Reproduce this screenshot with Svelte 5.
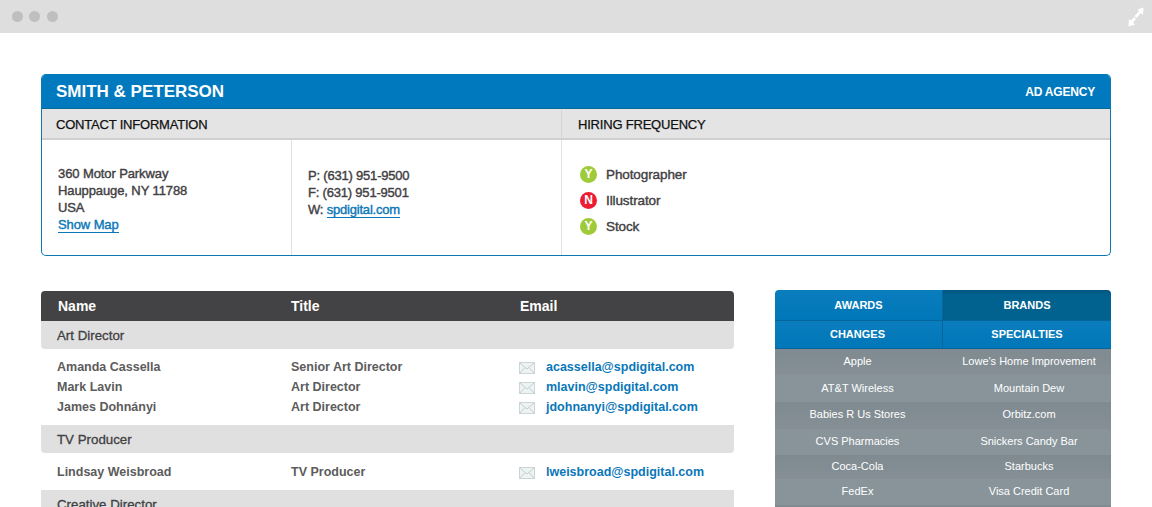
<script lang="ts">
  const phones = [
    { label: 'P:', value: '(631) 951-9500' },
    { label: 'F:', value: '(631) 951-9501' },
  ];
  const hiring = [
    { flag: 'Y', label: 'Photographer' },
    { flag: 'N', label: 'Illustrator' },
    { flag: 'Y', label: 'Stock' },
  ];
  const groups = [
    {
      name: 'Art Director',
      people: [
        { name: 'Amanda Cassella', title: 'Senior Art Director', email: 'acassella@spdigital.com' },
        { name: 'Mark Lavin', title: 'Art Director', email: 'mlavin@spdigital.com' },
        { name: 'James Dohnányi', title: 'Art Director', email: 'jdohnanyi@spdigital.com' },
      ],
    },
    {
      name: 'TV Producer',
      people: [{ name: 'Lindsay Weisbroad', title: 'TV Producer', email: 'lweisbroad@spdigital.com' }],
    },
    { name: 'Creative Director', people: [] },
  ];
  const tabs = [
    { label: 'AWARDS', active: false },
    { label: 'BRANDS', active: true },
    { label: 'CHANGES', active: false },
    { label: 'SPECIALTIES', active: false },
  ];
  const brands = [
    { left: 'Apple', right: "Lowe's Home Improvement", height: 26, lift: 2 },
    { left: 'AT&T Wireless', right: 'Mountain Dew', height: 27, lift: 2 },
    { left: 'Babies R Us Stores', right: 'Orbitz.com', height: 27, lift: 4 },
    { left: 'CVS Pharmacies', right: 'Snickers Candy Bar', height: 26, lift: 2 },
    { left: 'Coca-Cola', right: 'Starbucks', height: 24, lift: 3 },
    { left: 'FedEx', right: 'Visa Credit Card', height: 26, lift: 2 },
    { left: '', right: '', height: 26, lift: 0 },
  ];
</script>

<div class="page">
  <div class="chrome">
    <div class="dots"><i></i><i></i><i></i></div>
    <svg class="expand" viewBox="0 0 16 20" width="16" height="20" aria-hidden="true">
      <path d="M15.5 0.5 L15 8 L13 6 L8.5 11 L6.5 9 L11 4 L9.5 2.5 Z" fill="#fff" />
      <path d="M0.5 19.5 L1 12 L3 13.5 L6 10 L8 12 L5 15.5 L7 17.5 Z" fill="#fff" />
    </svg>
  </div>

  <section class="card">
    <header class="card-head">
      <h1>SMITH &amp; PETERSON</h1>
      <span>AD AGENCY</span>
    </header>
    <div class="card-grid">
      <h2 class="contact-title">CONTACT INFORMATION</h2>
      <h2 class="hiring-title">HIRING FREQUENCY</h2>
      <div class="address">
        <div>360 Motor Parkway</div>
        <div>Hauppauge, NY 11788</div>
        <div>USA</div>
        <a href="#map">Show Map</a>
      </div>
      <div class="phones">
        {#each phones as phone}
          <div>{phone.label} {phone.value}</div>
        {/each}
        <div>W: <a href="#web">spdigital.com</a></div>
      </div>
      <ul class="hiring">
        {#each hiring as item}
          <li>
            <b class:no={item.flag === 'N'}>{item.flag}</b>
            <span>{item.label}</span>
          </li>
        {/each}
      </ul>
    </div>
  </section>

  <div class="columns">
    <div class="contacts">
      <div class="row table-head">
        <span>Name</span>
        <span>Title</span>
        <span>Email</span>
      </div>
      {#each groups as group}
        <div class="group-name">{group.name}</div>
        {#if group.people.length}
          <div class="people" class:single={group.people.length === 1}>
            {#each group.people as person}
              <div class="row person">
                <span>{person.name}</span>
                <span>{person.title}</span>
                <span class="email">
                  <svg viewBox="0 0 16 12" width="16" height="12" aria-hidden="true">
                    <rect x="0.5" y="0.5" width="15" height="11" fill="#edf2f2" stroke="#ccd6d6" />
                    <path d="M1 1 L8 7 L15 1 M1 11 L6 5.5 M15 11 L10 5.5" fill="none" stroke="#c4d0d0" />
                  </svg>
                  <a href="#mail">{person.email}</a>
                </span>
              </div>
            {/each}
          </div>
        {/if}
      {/each}
    </div>

    <aside class="side">
      <div class="tabs">
        {#each tabs as tab}
          <div class="tab" class:active={tab.active}>{tab.label}</div>
        {/each}
      </div>
      <div class="brands">
        {#each brands as row}
          <div class="brand-row" style={`height:${row.height}px;padding-bottom:${row.lift}px`}>
            <span>{row.left}</span>
            <span class="right">{row.right}</span>
          </div>
        {/each}
      </div>
    </aside>
  </div>
</div>

<style>
  :global(body) {
    margin: 0;
    background: #fff;
    font-family: "Liberation Sans", Arial, sans-serif;
  }
  .page { height: 507px; overflow: hidden; color: #414042; }
  a { color: #0a77b8; text-decoration: none; }

  .chrome {
    height: 33px;
    display: flex;
    align-items: center;
    justify-content: space-between;
    padding: 0 8px 0 12px;
    background: #dedede;
  }
  .dots { display: flex; gap: 6px; margin-top: -1px; }
  .dots i { width: 11px; height: 11px; border-radius: 50%; background: #bfbfbf; }
  .dots i:last-child { margin-left: 1px; }
  .expand { margin-top: 1px; }

  .card {
    width: 1070px;
    box-sizing: border-box;
    margin: 41px 0 0 41px;
    border: 1px solid #0a77b0;
    border-top: 0;
    border-radius: 5px;
    overflow: hidden;
  }
  .card-head {
    height: 35px;
    display: flex;
    align-items: center;
    justify-content: space-between;
    box-sizing: border-box;
    padding: 2px 15px 0 14px;
    background: #0079be;
    border-bottom: 1px solid #0a6a9e;
    color: #fff;
  }
  .card-head h1 { margin: 0; font-size: 17px; font-weight: 700; }
  .card-head span { font-size: 12px; font-weight: 700; letter-spacing: -0.2px; }

  .card-grid {
    display: grid;
    grid-template-columns: 250px 270px 1fr;
    grid-template-rows: 31px 115px;
    font-size: 13px;
    letter-spacing: -0.1px;
    -webkit-text-stroke: 0.4px currentColor;
  }
  h2 {
    margin: 0;
    display: flex;
    align-items: center;
    background: #e4e4e4;
    border-bottom: 2px solid #cfcfcf;
    box-sizing: border-box;
    padding-top: 2px;
    color: #111;
    font-size: 13px;
    font-weight: 400;
    letter-spacing: -0.2px;
    -webkit-text-stroke: 0.25px currentColor;
  }
  .contact-title { grid-column: 1 / 3; padding-left: 14px; border-right: 1px solid #d5d5d5; }
  .hiring-title { padding-left: 16px; }
  .address { padding: 25px 0 0 16px; border-right: 1px solid #e2e2e2; line-height: 17px; }
  .phones { padding: 27px 0 0 16px; border-right: 1px solid #e2e2e2; line-height: 17px; letter-spacing: -0.2px; }
  .address a, .phones a { border-bottom: 1px solid #0a77b8; }
  .hiring { list-style: none; margin: 0; padding: 21px 0 0 18px; font-size: 13.5px; }
  .hiring li { height: 26px; display: flex; align-items: center; gap: 9px; }
  .hiring b {
    width: 17px;
    height: 17px;
    display: flex;
    align-items: center;
    justify-content: center;
    border-radius: 50%;
    background: #9fcb3b;
    color: #fff;
    font-size: 12px;
    -webkit-text-stroke: 0;
  }
  .hiring b.no { background: #ee1c33; }

  .columns {
    display: flex;
    align-items: flex-start;
    gap: 41px;
    margin: 35px 41px 0;
  }
  .contacts { width: 693px; flex: none; }
  .row { display: grid; }
  .table-head {
    grid-template-columns: 233px 229px 1fr;
    height: 30px;
    align-items: center;
    padding-left: 17px;
    background: #434244;
    border-radius: 4px 4px 0 0;
    color: #fff;
    font-size: 14px;
    font-weight: 700;
  }
  .group-name {
    height: 28px;
    display: flex;
    align-items: center;
    padding-left: 16px;
    background: #e0e0e0;
    border-radius: 0 0 4px 4px;
    font-size: 13.3px;
    -webkit-text-stroke: 0.3px currentColor;
  }
  .people { padding: 8px 0; }
  .people.single { padding-top: 9px; }
  .person {
    grid-template-columns: 234px 228px 1fr;
    height: 20px;
    align-items: center;
    padding-left: 16px;
    color: #5c5c5c;
    font-size: 12.5px;
    font-weight: 700;
  }
  .email { display: flex; align-items: center; gap: 11px; }
  .email svg { margin-top: 2px; }

  .side { width: 336px; flex: none; margin-top: -1px; }
  .tabs {
    display: grid;
    grid-template-columns: 168px 168px;
    grid-template-rows: 31px 28px;
    border-radius: 4px 4px 0 0;
    overflow: hidden;
  }
  .tab {
    display: flex;
    align-items: center;
    justify-content: center;
    background: linear-gradient(#0a7dbd, #0077b8);
    border-bottom: 1px solid #06659c;
    box-sizing: border-box;
    color: #fff;
    font-size: 11px;
    font-weight: 700;
  }
  .tab:nth-child(odd) { border-right: 1px solid #06659c; }
  .tab:nth-child(n + 3) { padding-bottom: 2px; }
  .tab:nth-child(3) { padding-right: 2px; }
  .tab.active { background: linear-gradient(#05557f, #02628f 20%); }

  .brand-row {
    display: grid;
    grid-template-columns: 165px 1fr;
    align-items: center;
    box-sizing: border-box;
    background: linear-gradient(#7f8b91, #858f95);
    color: #fff;
    font-size: 11px;
    text-align: center;
  }
  .brand-row:nth-child(even) { background: #88949a; }
  .right { padding-left: 7px; }
</style>
